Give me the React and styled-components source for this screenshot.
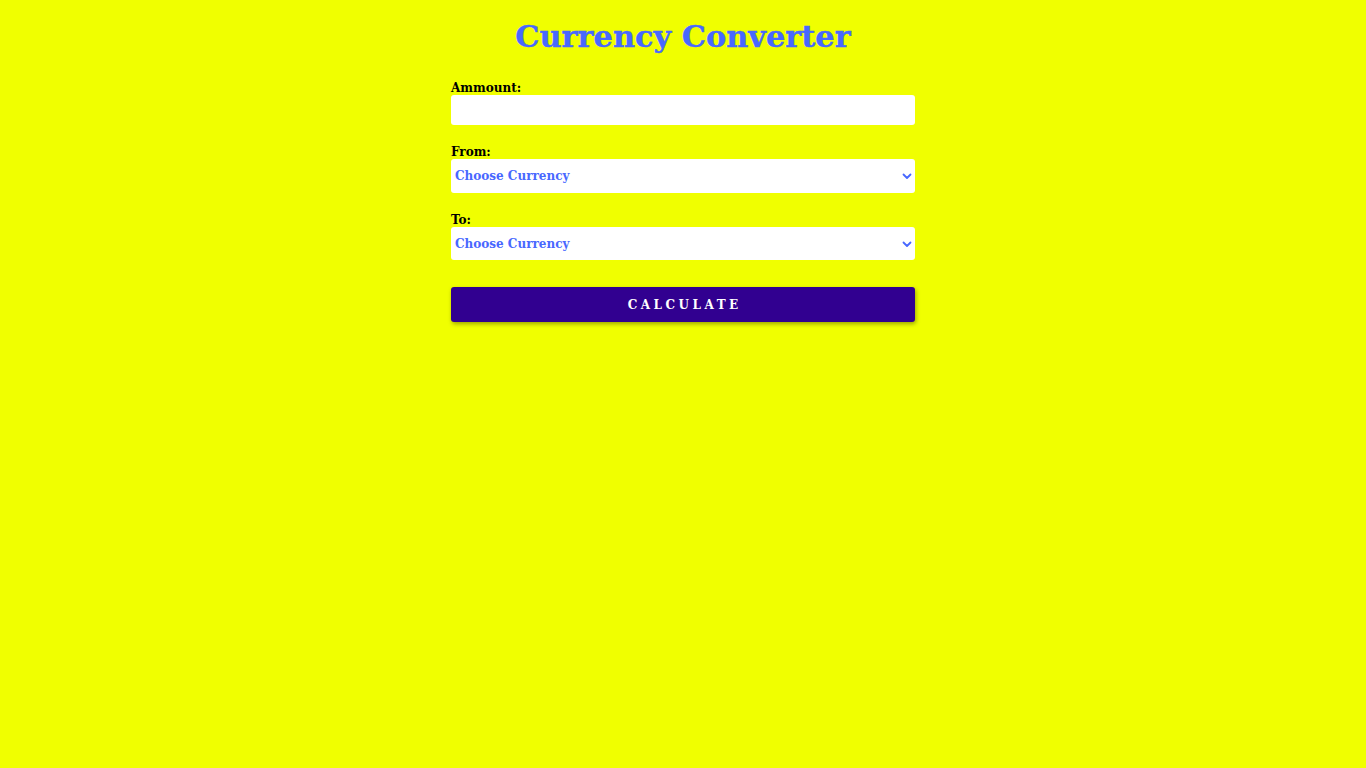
import React from "react";
import styled, { createGlobalStyle } from "styled-components";

const GlobalStyle = createGlobalStyle`
  html, body {
    margin: 0;
    padding: 0;
    background: #f0ff00;
    font-family: "DejaVu Serif", "Liberation Serif", serif;
  }
  * {
    box-sizing: border-box;
  }
`;

const Page = styled.div`
  min-height: 768px;
  display: flex;
  flex-direction: column;
  align-items: center;
  padding-top: 16px;
`;

const Title = styled.h1`
  margin: 0;
  font-size: 30.4px;
  font-weight: 700;
  color: #4868ff;
  line-height: 40px;
  -webkit-text-stroke: 0.4px #4868ff;
`;

const Form = styled.form`
  width: 464px;
  display: flex;
  flex-direction: column;
  margin-top: 24px;
`;

const Field = styled.div`
  display: flex;
  flex-direction: column;
  margin-bottom: 19px;
`;

const Label = styled.label`
  font-size: 12px;
  font-weight: 700;
  color: #000;
  line-height: 15px;
  padding-top: 1px;
  margin-bottom: -1px;
`;

const Input = styled.input`
  height: 30px;
  border: none;
  border-radius: 3px;
  background: #fff;
  outline: none;
  padding: 0 4px;
  font-family: inherit;
`;

const SelectWrap = styled.div`
  position: relative;
  height: ${(props) => props.h}px;
`;

const Select = styled.select`
  appearance: none;
  width: 100%;
  height: 100%;
  border: none;
  border-radius: 3px;
  background: #fff;
  color: #4868ff;
  font-family: inherit;
  font-size: 12px;
  font-weight: 700;
  padding: 0 4px;
  outline: none;
`;

const Chevron = styled.svg`
  position: absolute;
  right: 3px;
  top: 50%;
  transform: translateY(-50%);
  pointer-events: none;
`;

const Button = styled.button`
  height: 35px;
  border: none;
  border-radius: 3px;
  background: #310090;
  color: #fff;
  font-family: inherit;
  font-size: 12px;
  font-weight: 700;
  letter-spacing: 3.5px;
  text-indent: 3.5px;
  text-transform: uppercase;
  box-shadow: 1px 2px 4px rgba(0, 0, 0, 0.35);
  cursor: pointer;
  margin-top: 8px;
`;

function CurrencySelect({ h }) {
  return (
    <SelectWrap h={h}>
      <Select defaultValue="">
        <option value="">Choose Currency</option>
        <option value="USD">USD</option>
        <option value="EUR">EUR</option>
      </Select>
      <Chevron width="10" height="10" viewBox="0 0 10 10">
        <path
          d="M1.5 3.5 L5 7 L8.5 3.5"
          fill="none"
          stroke="#4868ff"
          strokeWidth="1.8"
          strokeLinecap="round"
          strokeLinejoin="round"
        />
      </Chevron>
    </SelectWrap>
  );
}

export default function App() {
  return (
    <>
      <GlobalStyle />
      <Page>
        <Title>Currency Converter</Title>
        <Form onSubmit={(e) => e.preventDefault()}>
          <Field>
            <Label>Ammount:</Label>
            <Input type="text" />
          </Field>
          <Field>
            <Label>From:</Label>
            <CurrencySelect h={34} />
          </Field>
          <Field>
            <Label>To:</Label>
            <CurrencySelect h={33} />
          </Field>
          <Button type="submit">Calculate</Button>
        </Form>
      </Page>
    </>
  );
}
